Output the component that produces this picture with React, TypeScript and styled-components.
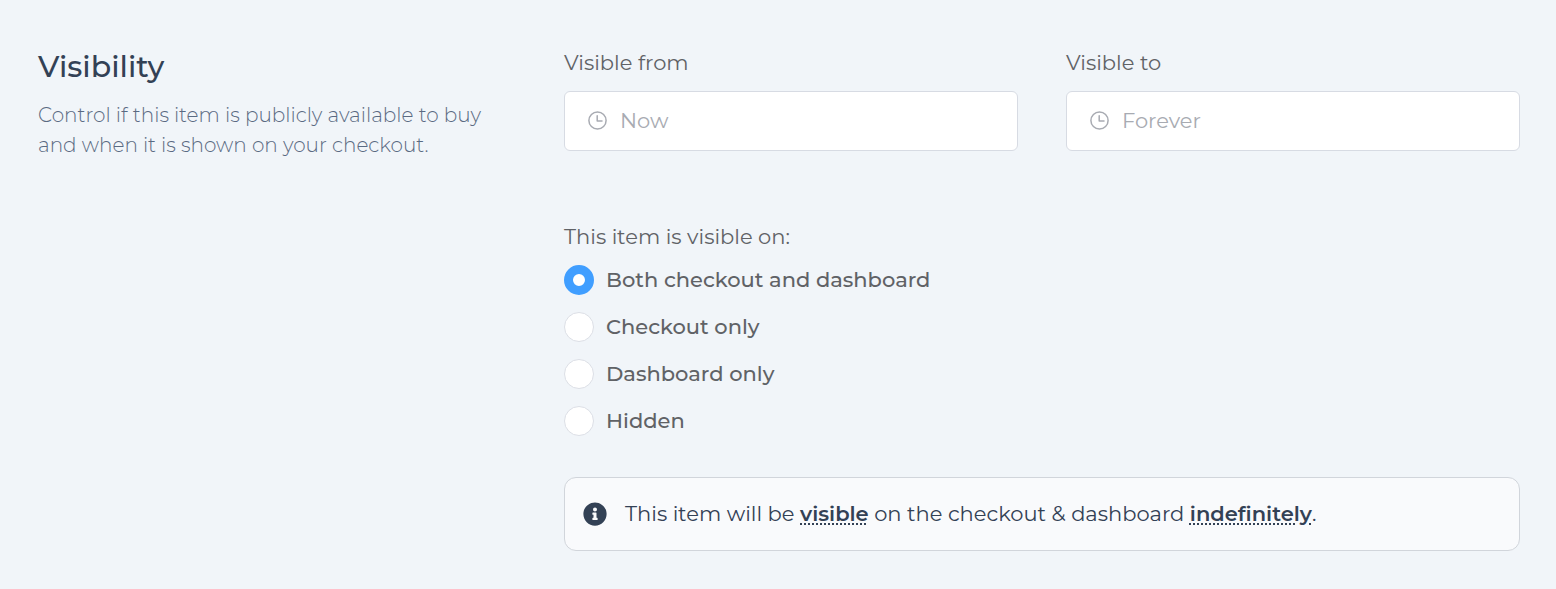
import React, { useId, useState } from 'react';
import styled, { createGlobalStyle } from 'styled-components';
import { FaInfoCircle } from 'react-icons/fa';

const GlobalStyle = createGlobalStyle`
  *, *::before, *::after { box-sizing: border-box; }
  body {
    margin: 0;
    background: #f1f5f9;
    font-family: Montserrat, Inter, "Open Sans", sans-serif;
    font-size: 21px;
    font-weight: 400;
    line-height: 30px;
    color: #606266;
  }
`;

const Section = styled.section`
  display: grid;
  grid-template-columns: minmax(0, 1fr) minmax(0, 2fr);
  column-gap: 48px;
  padding: 48px 36px 38px 38px;

  @media (max-width: 900px) {
    grid-template-columns: minmax(0, 1fr);
    row-gap: 36px;
  }
`;

const Title = styled.h2`
  margin: 0 0 14px;
  font-size: 30px;
  line-height: 38px;
  font-weight: 500;
  color: #334155;
`;

const Description = styled.p`
  margin: 0;
  font-size: 20px;
  font-weight: 300;
  color: #5a6a82;
`;

const Fields = styled.div`
  display: grid;
  grid-template-columns: repeat(2, minmax(0, 1fr));
  gap: 48px;
`;

const Field = styled.div`
  display: flex;
  flex-direction: column;
  gap: 13px;
`;

const InputBox = styled.div`
  display: flex;
  align-items: center;
  gap: 12px;
  height: 60px;
  padding: 0 23px;
  border: 1px solid #d7dbe3;
  border-radius: 6px;
  background: #fff;
  color: #a8abb2;

  &:focus-within { border-color: #409eff; }
`;

const ClockIcon = styled.svg`
  flex: none;
  width: 20px;
  height: 20px;
`;

const DateInput = styled.input`
  flex: 1;
  min-width: 0;
  padding: 0;
  border: 0;
  outline: 0;
  background: transparent;
  font: inherit;
  color: #606266;

  &::placeholder { color: #a8abb2; opacity: 1; }
`;

const Options = styled.fieldset`
  display: flex;
  flex-direction: column;
  gap: 17px;
  margin: 71px 0 0;
  padding: 0;
  border: 0;
`;

const Legend = styled.legend`
  margin-bottom: 13px;
  padding: 0;
`;

const Option = styled.label`
  display: flex;
  align-items: center;
  gap: 12px;
  font-weight: 500;
  cursor: pointer;
`;

const Radio = styled.input`
  flex: none;
  appearance: none;
  width: 30px;
  height: 30px;
  margin: 0;
  border: 1px solid #dcdfe6;
  border-radius: 50%;
  background: #fff;
  cursor: pointer;

  &:checked {
    border: 9px solid #409eff;
  }
`;

const Notice = styled.div`
  display: flex;
  align-items: center;
  gap: 18px;
  margin-top: 41px;
  padding: 21px 18px;
  border: 1px solid #d1d5db;
  border-radius: 12px;
  background: #f9fafc;
  color: #334155;

  svg { flex: none; }
`;

const NoticeText = styled.p`
  margin: 0;
`;

const Emphasis = styled.strong`
  font-weight: 600;
  text-decoration: underline dotted 2px;
  text-underline-offset: 2px;
`;

type DateFieldProps = { label: string; placeholder: string };

function DateField({ label, placeholder }: DateFieldProps) {
  const id = useId();
  return (
    <Field>
      <label htmlFor={id}>{label}</label>
      <InputBox>
        <ClockIcon viewBox="0 0 20 20" fill="none" stroke="currentColor" strokeWidth="1.5" aria-hidden="true">
          <circle cx="9.5" cy="9.5" r="8.6" />
          <path d="M9.2 4.8V9.9H14" strokeLinecap="round" strokeLinejoin="round" />
        </ClockIcon>
        <DateInput id={id} type="text" placeholder={placeholder} />
      </InputBox>
    </Field>
  );
}

const places = [
  { value: 'both', label: 'Both checkout and dashboard' },
  { value: 'checkout', label: 'Checkout only' },
  { value: 'dashboard', label: 'Dashboard only' },
  { value: 'hidden', label: 'Hidden' },
];

export default function App() {
  const [place, setPlace] = useState('both');
  return (
    <>
      <GlobalStyle />
      <Section>
        <header>
          <Title>Visibility</Title>
          <Description>
            Control if this item is publicly available to buy and when it is shown on your checkout.
          </Description>
        </header>
        <div>
          <Fields>
            <DateField label="Visible from" placeholder="Now" />
            <DateField label="Visible to" placeholder="Forever" />
          </Fields>
          <Options>
            <Legend>This item is visible on:</Legend>
            {places.map((p) => (
              <Option key={p.value}>
                <Radio
                  type="radio"
                  name="place"
                  value={p.value}
                  checked={place === p.value}
                  onChange={() => setPlace(p.value)}
                />
                {p.label}
              </Option>
            ))}
          </Options>
          <Notice>
            <FaInfoCircle size={24} aria-hidden="true" />
            <NoticeText>
              This item will be <Emphasis>visible</Emphasis> on the checkout &amp; dashboard{' '}
              <Emphasis>indefinitely</Emphasis>.
            </NoticeText>
          </Notice>
        </div>
      </Section>
    </>
  );
}
